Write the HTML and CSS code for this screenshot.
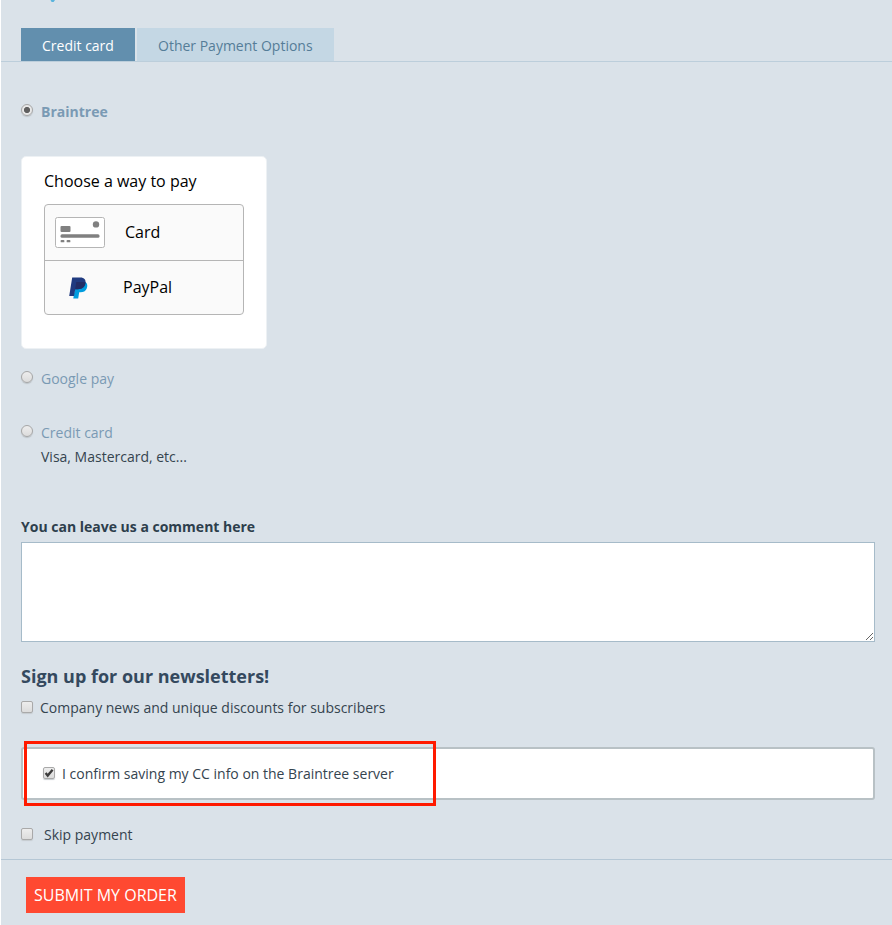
FILE: index.html
```html
<!DOCTYPE html>
<html lang="en">
<head>
<meta charset="utf-8">
<title>Checkout</title>
<link rel="stylesheet" href="styles.css">
</head>
<body>
<main class="checkout">
  <svg class="heading-tail" width="6" height="3" viewBox="0 0 6 3" aria-hidden="true"><path d="M.5 0H5L3.6 1.9H1.6Z" fill="#5ab4dc"/></svg>
  <nav class="tabs">
    <a class="tab tab-active">Credit card</a>
    <a class="tab">Other Payment Options</a>
  </nav>
  <form class="payment">
    <label class="method method-selected"><span class="radio radio-on"></span>Braintree</label>
    <section class="dropin">
      <div class="dropin-title">Choose a way to pay</div>
      <div class="options">
        <div class="option">
          <svg class="card-icon" width="50" height="31" viewBox="0 0 50 31">
            <rect x=".5" y=".5" width="49" height="30" rx="2" fill="#fff" stroke="#b5b5b5"/>
            <circle cx="41" cy="7.4" r="3.2" fill="#808080"/>
            <rect x="5.5" y="9" width="10" height="6" rx="1" fill="#808080"/>
            <rect x="5.5" y="17.2" width="39" height="3.6" rx="1.5" fill="#808080"/>
            <rect x="5.6" y="22.9" width="3.8" height="2.4" rx=".9" fill="#808080"/>
            <rect x="11.6" y="22.9" width="3.8" height="2.4" rx=".9" fill="#808080"/>
          </svg>
          <span class="option-name">Card</span>
        </div>
        <div class="option option-paypal">
          <svg class="paypal-icon" width="19" height="22" viewBox="0 0 19 22">
            <path d="M15.8 4.8C18.6 6 18.8 9 17.6 11.8C16.6 14.3 14.4 15.2 11.5 15.2H10.2L9.2 21.5H4.3L5.7 12.5L7 7Z" fill="#009cde"/>
            <path d="M3.2.5H11.2C15.5.5 17.2 3 16.4 6.6C15.5 10.6 13 12.3 8.8 12.3H6.2L5 19H.2Z" fill="#203b80"/>
            <path d="M7.3 5H14.5Q15.9 5 16.6 5.6C16 10.2 13.2 12.3 8.8 12.3H6.2Z" fill="#222d65"/>
          </svg>
          <span class="option-name">PayPal</span>
        </div>
      </div>
    </section>
    <label class="method method-google"><span class="radio"></span>Google pay</label>
    <label class="method method-card"><span class="radio"></span>Credit card</label>
    <div class="hint">Visa, Mastercard, etc...</div>
    <label class="comment-label" for="comment">You can leave us a comment here</label>
    <textarea class="comment" id="comment"></textarea>
    <h2 class="news-title">Sign up for our newsletters!</h2>
    <label class="check-row"><span class="check"></span>Company news and unique discounts for subscribers</label>
    <div class="confirm">
      <span class="check"><svg width="12" height="12" viewBox="0 0 12 12"><path d="M2.6 6.1L4.7 8.6L9.6 2.8" fill="none" stroke="#3c3c3c" stroke-width="2.3"/></svg></span>I confirm saving my CC info on the Braintree server
      <div class="highlight"></div>
    </div>
    <label class="check-row skip"><span class="check"></span>Skip payment</label>
  </form>
  <footer class="actions"><button class="submit" type="button">SUBMIT MY ORDER</button></footer>
</main>
</body>
</html>
```

FILE: styles.css
```css
* { box-sizing: border-box; }
body {
  margin: 0;
  background: #fff;
  font: 14px/20px "Open Sans", sans-serif;
  color: #35444f;
}
.checkout {
  position: relative;
  height: 925px;
  margin-left: 1px;
  padding-top: 28px;
  background: #dae2e9;
  overflow: hidden;
}
.heading-tail { position: absolute; left: 49px; top: 0; }
.tabs {
  display: flex;
  gap: 2px;
  height: 34px;
  padding-left: 20px;
  border-bottom: 1px solid #bccedb;
}
.tab {
  width: 197px;
  padding: 8px 0 0 21px;
  background: #c4d7e4;
  color: #557d98;
}
.tab-active { width: 114px; background: #628fae; color: #fff; }
.payment {
  display: flex;
  flex-direction: column;
  height: 797px;
  padding: 40px 17px 0 20px;
}
.method { display: flex; height: 20px; color: #7a9ab4; }
.method-selected { font-weight: 700; }
.radio {
  width: 12px;
  height: 12px;
  margin: 2px 8px 0 0;
  border: 1px solid #a6a6a6;
  border-radius: 50%;
  background: linear-gradient(#ededed, #dcdcdc);
  box-shadow: 0 1px 1px #bcc3c8;
}
.radio-on { background: radial-gradient(circle, #606060 0 2.7px, #e8e8e8 3.5px); }
.dropin {
  width: 246px;
  height: 193px;
  margin-top: 34px;
  padding: 12px 22px 0;
  border: 1px solid #edf1f4;
  border-radius: 5px;
  background: #fff;
  color: #000;
  font-size: 16px;
  line-height: 24px;
}
.options {
  height: 111px;
  margin-top: 11px;
  border: 1px solid #b5b5b5;
  border-radius: 4px;
  background: #fafafa;
}
.option { display: flex; align-items: center; height: 55px; padding-left: 10px; }
.option-name { padding-bottom: 2px; }
.card-icon { margin-right: 20px; }
.option-paypal { height: 54px; padding-left: 24px; border-top: 1px solid #b5b5b5; }
.paypal-icon { margin-right: 35px; }
.method-google { margin-top: 20px; }
.method-card { margin-top: 34px; }
.hint { margin: 4px 0 0 20px; }
.comment-label { margin-top: 50px; font-weight: 700; color: #2d3e4c; }
.comment {
  width: 854px;
  height: 100px;
  margin: 5px 0 0;
  border: 1px solid #a6bbc9;
  outline: 0;
  background: #fff;
  resize: vertical;
}
.news-title { margin: 21px 0 0; font-size: 18px; line-height: 26px; color: #34495e; }
.check-row { display: flex; height: 20px; margin-top: 9px; }
.check {
  width: 12px;
  height: 12px;
  margin: 3px 7px 0 0;
  border: 1px solid #a9a9a9;
  border-radius: 2px;
  background: linear-gradient(#ededed, #dcdcdc);
  box-shadow: 0 1px 1px #c5cbcf;
}
.check svg { display: block; margin: -1px; }
.confirm {
  position: relative;
  display: flex;
  height: 53px;
  margin-top: 29px;
  padding: 15px 20px;
  border: 2px solid #b8c1c5;
  border-radius: 3px;
  background: #fff;
}
.highlight {
  position: absolute;
  left: 1px;
  top: -8px;
  width: 412px;
  height: 65px;
  border: 3px solid #ff1a00;
}
.skip { margin-top: 25px; }
.skip .check { margin-right: 11px; }
.actions { padding: 17px 0 0 25px; border-top: 1px solid #b5c7d5; }
.submit {
  display: block;
  width: 159px;
  height: 36px;
  padding: 0;
  border: 0;
  background: #ff4931;
  color: #fff;
  font: 16px/36px "Open Sans", sans-serif;
}
```
